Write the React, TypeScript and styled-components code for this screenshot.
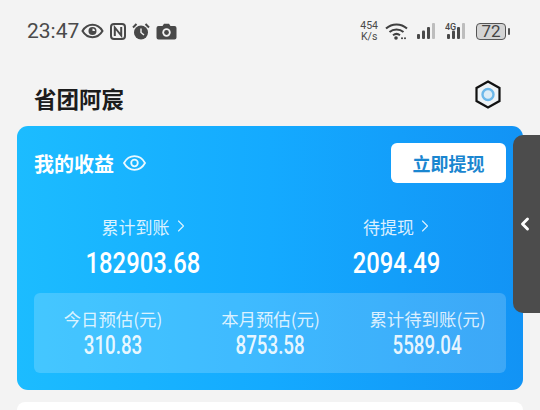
import React from "react";
import styled, { createGlobalStyle } from "styled-components";
import { ChevronLeft, ChevronRight } from "lucide-react";

const GlobalStyle = createGlobalStyle`
  html, body {
    margin: 0;
    padding: 0;
    background: #f3f3f3;
    overflow: hidden;
  }
  body {
    font-family: Roboto, "Noto Sans CJK SC", sans-serif;
  }
`;

const Screen = styled.div`
  position: relative;
  width: 540px;
  height: 410px;
  overflow: hidden;
  background: #f3f3f3;
`;

const StatusBar = styled.div`
  height: 62px;
  padding: 0 32px 0 27px;
  display: flex;
  align-items: center;
  justify-content: space-between;
  color: #454545;
`;

const StatusGroup = styled.div<{ $gap: number }>`
  display: flex;
  align-items: center;
  gap: ${(p) => p.$gap}px;
`;

const Clock = styled.span`
  font-size: 21px;
  line-height: 24px;
  color: #4a4a4a;
  margin-right: -4px;
`;

const Speed = styled.div`
  font-size: 10.5px;
  line-height: 11.5px;
  text-align: center;
  color: #4a4a4a;
`;

const Battery = styled.div`
  position: relative;
  width: 28px;
  height: 15px;
  margin-left: 1px;
  margin-right: 2px;
  border: 1.5px solid #555;
  border-radius: 4px;
  background: #d4d4d4;
  color: #444;
  font-size: 17px;
  line-height: 15px;
  text-align: center;
  &::after {
    content: "";
    position: absolute;
    right: -5px;
    top: 4px;
    width: 2px;
    height: 7px;
    background: #555;
    border-radius: 1px;
  }
`;

const Header = styled.div`
  height: 64px;
  padding: 0 39px 0 34px;
  display: flex;
  align-items: center;
  justify-content: space-between;
`;

const Title = styled.h1`
  margin: 8px 0 0;
  font-family: "Noto Sans CJK SC", sans-serif;
  font-size: 22.5px;
  font-weight: 700;
  color: #1c1c1c;
`;

const Card = styled.section`
  margin: 0 17px;
  height: 264px;
  box-sizing: border-box;
  padding: 17px;
  border-radius: 11px;
  background: linear-gradient(90deg, #1cbcff 0%, #14aaff 50%, #1293f5 100%);
  color: #fff;
  display: flex;
  flex-direction: column;
`;

const CardTop = styled.div`
  height: 40px;
  display: flex;
  align-items: center;
  justify-content: space-between;
`;

const CardTitle = styled.div`
  display: flex;
  align-items: center;
  gap: 9px;
  font-family: "Noto Sans CJK SC", sans-serif;
  font-size: 20px;
  font-weight: 700;
`;

const WithdrawButton = styled.button`
  width: 115px;
  height: 40px;
  border: 0;
  border-radius: 6px;
  background: #fff;
  color: #1a86d0;
  font-family: "Noto Sans CJK SC", sans-serif;
  font-size: 18px;
  font-weight: 700;
  padding: 0;
`;

const Totals = styled.div`
  display: grid;
  grid-template-columns: 218px 1fr;
  column-gap: 34px;
  margin-top: 31px;
`;

const TotalCell = styled.div`
  display: flex;
  flex-direction: column;
  align-items: center;
`;

const TotalLabel = styled.div`
  display: flex;
  align-items: center;
  gap: 1px;
  height: 24px;
  margin: 0 0 9px 6px;
  font-family: "Noto Sans CJK SC", sans-serif;
  font-size: 17px;
  font-weight: 400;
  color: rgba(255, 255, 255, 0.85);
`;

const Amount = styled.div<{ $size: number; $squeeze: number; $tint: number }>`
  font-family: Roboto, sans-serif;
  font-weight: 500;
  font-size: ${(p) => p.$size}px;
  line-height: 1.15;
  color: rgba(255, 255, 255, ${(p) => p.$tint});
  transform: scaleX(${(p) => p.$squeeze});
  white-space: nowrap;
`;

const Estimates = styled.div`
  margin-top: auto;
  height: 80px;
  border-radius: 6px;
  background: rgba(255, 255, 255, 0.18);
  display: grid;
  grid-template-columns: 158px 157px 1fr;
  padding-top: 14px;
  box-sizing: border-box;
`;

const EstimateCell = styled.div`
  display: flex;
  flex-direction: column;
  align-items: center;
`;

const EstimateLabel = styled.div`
  font-family: "Noto Sans CJK SC", sans-serif;
  font-size: 17.4px;
  font-weight: 400;
  line-height: 23px;
  margin-bottom: 2px;
  color: rgba(255, 255, 255, 0.82);
  white-space: nowrap;
`;

const NextCard = styled.div`
  margin: 12px 17px 0;
  height: 60px;
  border-radius: 8px;
  background: #fff;
`;

const SideTab = styled.div`
  position: absolute;
  left: 513px;
  top: 135px;
  width: 40px;
  height: 178px;
  border-radius: 10px;
  background: #4c4c4c;
  display: flex;
  align-items: center;
  padding-left: 2px;
  box-sizing: border-box;
  color: #fff;
`;

const EyeStatus = () => (
  <svg width="23" height="16" viewBox="0 0 23 16" fill="none">
    <path d="M1.5 8C4 3.8 7.5 1.8 11.5 1.8S19 3.8 21.5 8c-2.500 4.200-6 6.200-10 6.200S4 12.200 1.500 8Z" stroke="#484848" strokeWidth="2" />
    <circle cx="11.500" cy="8" r="4" fill="#484848" />
    <path d="M11.500 5.500a2.500 2.500 0 0 1 2.500 2.500h-2.500Z" fill="#f3f3f3" />
  </svg>
);

const NfcIcon = () => (
  <svg width="16" height="17" viewBox="0 0 16 17" fill="none" stroke="#484848" strokeWidth="2">
    <rect x="1" y="1" width="14" height="15" rx="3" />
    <path d="M4.800 13V4.500L11.200 12.500V4" />
  </svg>
);

const AlarmIcon = () => (
  <svg width="18" height="17" viewBox="0 0 18 17">
    <circle cx="9" cy="9.500" r="7" fill="#484848" />
    <path d="M9 5.500V9.500L12 12" stroke="#f3f3f3" strokeWidth="1.400" fill="none" />
    <path d="M1 4.500 4.500 1M17 4.500 13.500 1" stroke="#484848" strokeWidth="2" />
  </svg>
);

const CameraIcon = () => (
  <svg width="21" height="17" viewBox="0 0 21 17">
    <path d="M2.500 3H6.500L8 .8H13L14.500 3H18.500A2 2 0 0 1 20.500 5V14.500A2 2 0 0 1 18.500 16.500H2.500A2 2 0 0 1 .5 14.500V5A2 2 0 0 1 2.500 3Z" fill="#484848" />
    <circle cx="10.500" cy="9.500" r="4.200" fill="#f3f3f3" />
    <circle cx="10.500" cy="9.500" r="2.400" fill="#484848" />
  </svg>
);

const WifiIcon = () => (
  <svg width="23" height="18" viewBox="0 0 23 18" fill="none" stroke="#3f3f3f" strokeWidth="2">
    <path d="M1 6.500C7 1 16 1 22 6.500" />
    <path d="M4.500 10C8.500 6.500 14.500 6.500 18.500 10" />
    <path d="M8 13.300C10 11.700 13 11.700 15 13.300" />
    <circle cx="11" cy="16" r="1.800" fill="#3f3f3f" stroke="none" />
    <circle cx="17" cy="16.300" r="1" fill="#3f3f3f" stroke="none" />
    <circle cx="20" cy="16.300" r="1" fill="#3f3f3f" stroke="none" />
  </svg>
);

const SignalIcon = ({ label, lit }: { label?: string; lit: number }) => (
  <svg width="23" height="18" viewBox="0 0 23 18">
    {[0, 1, 2, 3].map((i) => (
      <rect
        key={i}
        x={2 + i * 5}
        y={i === 3 ? 1 : 12 - i * 3.500}
        width="3"
        height={i === 3 ? 16 : 5 + i * 3.500}
        rx="1"
        fill={i < lit ? "#484848" : "#bdbdbd"}
      />
    ))}
    {label && (
      <text x="0" y="8" fontSize="9" fontWeight="500" fill="#484848" fontFamily="Roboto, sans-serif">
        {label}
      </text>
    )}
  </svg>
);

const HexIcon = () => (
  <svg width="26" height="29" viewBox="0 0 26 29" fill="none">
    <path d="M13 1.500 24.500 8V21L13 27.500 1.500 21V8Z" stroke="#111" strokeWidth="2.200" fill="#eef3f6" />
    <circle cx="13" cy="14.500" r="5.500" stroke="#6cb8ea" strokeWidth="2.400" fill="#dcecf6" />
  </svg>
);

const EyeOutline = () => (
  <svg width="23" height="16" viewBox="0 0 23 16" fill="none" stroke="#eaf8ff" strokeWidth="1.800">
    <path d="M1 8C3.500 3.500 7 1.200 11.500 1.200S19.500 3.500 22 8c-2.500 4.500-6 6.800-10.500 6.800S3.500 12.500 1 8Z" />
    <circle cx="11.500" cy="8" r="3.300" />
  </svg>
);

const estimates = [
  { label: "今日预估(元)", value: "310.83" },
  { label: "本月预估(元)", value: "8753.58" },
  { label: "累计待到账(元)", value: "5589.04" },
];

const App = () => (
  <Screen>
    <GlobalStyle />
    <StatusBar>
      <StatusGroup $gap={6}>
        <Clock>23:47</Clock>
        <EyeStatus />
        <NfcIcon />
        <AlarmIcon />
        <CameraIcon />
      </StatusGroup>
      <StatusGroup $gap={7}>
        <Speed>
          454
          <br />
          K/s
        </Speed>
        <WifiIcon />
        <SignalIcon lit={3} />
        <SignalIcon label="4G" lit={3} />
        <Battery>72</Battery>
      </StatusGroup>
    </StatusBar>
    <Header>
      <Title>省团阿宸</Title>
      <HexIcon />
    </Header>
    <Card>
      <CardTop>
        <CardTitle>
          我的收益
          <EyeOutline />
        </CardTitle>
        <WithdrawButton>立即提现</WithdrawButton>
      </CardTop>
      <Totals>
        <TotalCell>
          <TotalLabel>
            累计到账
            <ChevronRight size={20} strokeWidth={1.300} />
          </TotalLabel>
          <Amount $size={29} $squeeze={0.82} $tint={1}>182903.68</Amount>
        </TotalCell>
        <TotalCell>
          <TotalLabel>
            待提现
            <ChevronRight size={20} strokeWidth={1.300} />
          </TotalLabel>
          <Amount $size={29} $squeeze={0.82} $tint={1}>2094.49</Amount>
        </TotalCell>
      </Totals>
      <Estimates>
        {estimates.map((item) => (
          <EstimateCell key={item.label}>
            <EstimateLabel>{item.label}</EstimateLabel>
            <Amount $size={25} $squeeze={0.75} $tint={0.9}>{item.value}</Amount>
          </EstimateCell>
        ))}
      </Estimates>
    </Card>
    <NextCard />
    <SideTab>
      <ChevronLeft size={20} strokeWidth={3.500} />
    </SideTab>
  </Screen>
);

export default App;
